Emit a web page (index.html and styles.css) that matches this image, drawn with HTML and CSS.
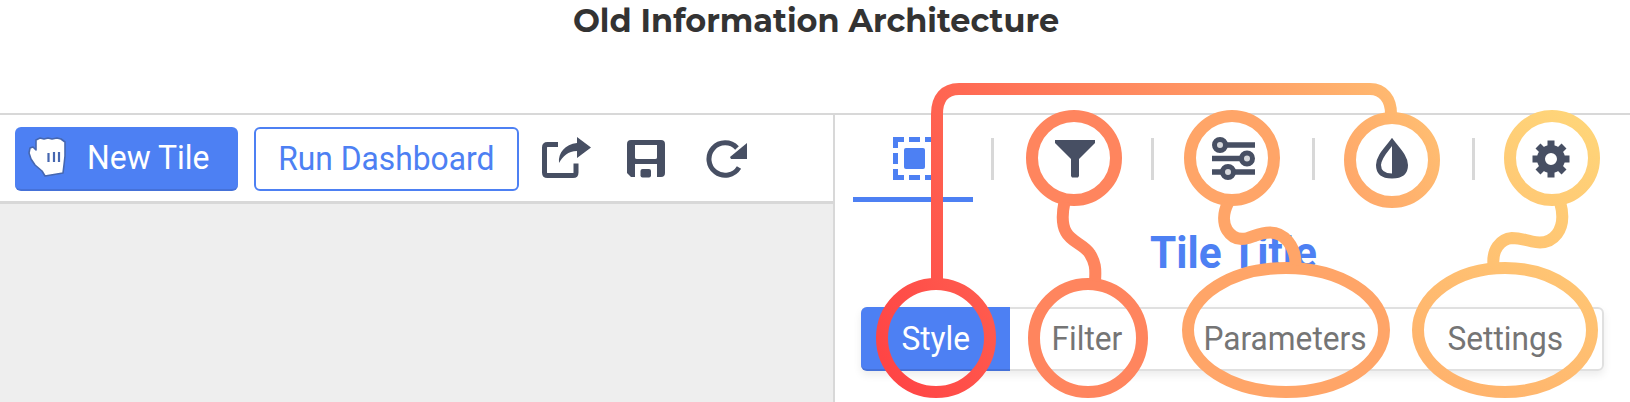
FILE: index.html
```html
<!DOCTYPE html>
<html lang="en">
<head>
<meta charset="utf-8">
<title>Old Information Architecture</title>
<link rel="stylesheet" href="styles.css">
</head>
<body>
<main class="page">
  <h1 class="heading"><span class="t-heading">Old Information Architecture</span></h1>
  <div class="app">
    <section class="left">
      <div class="toolbar">
        <button class="btn primary">
          <svg class="hand" width="42" height="44" viewBox="0 0 42 44"><path d="M8 4L12 2L16 3L20 2L24 3L29 2L33 3L37 6L37 20L36 29L35 37L29 38L17 40L14 35L7 29L3 23L1 17L2 12L5 11L8 14Z" fill="#fff" stroke="#4667b0" stroke-width="1.6" stroke-linejoin="round"/><path d="M20.500 17v9M26 16v10M31 16v10" stroke="#4667b0" stroke-width="2.200"/></svg>
          <span class="t-new">New Tile</span>
        </button>
        <button class="btn outline"><span class="t-run">Run Dashboard</span></button>
        <svg class="ico share" width="50" height="42" viewBox="0 0 50 42"><path d="M16 7.500H5.500Q2.500 7.500 2.500 10.500V35.500Q2.500 38.500 5.500 38.500H31Q34 38.500 34 35.500V26.500" fill="none" stroke="#474f63" stroke-width="5"/><path d="M17 26C16 16 23 7 35 6V0L49 10.500L35 21V14C26 14 21 19 17 26Z" fill="#474f63"/></svg>
        <svg class="ico save" width="38" height="38" viewBox="0 0 38 38"><path d="M4 0H34Q38 0 38 4V33Q38 37 34 37H30V24H8V37H4L0 33V4Q0 0 4 0ZM8 5V17.500Q8 19 10 19H28Q30 19 30 17.500V5Z" fill="#474f63" fill-rule="evenodd"/><rect x="13.500" y="29" width="10.500" height="8.500" rx="2" fill="#474f63"/></svg>
        <svg class="ico refresh" width="41" height="38" viewBox="0 0 41 38"><path d="M31 8A16.200 16.200 0 1 0 33 27.500" fill="none" stroke="#474f63" stroke-width="5"/><path d="M41 3V19H25L24 17Z" fill="#474f63"/></svg>
      </div>
      <div class="canvas"></div>
    </section>
    <section class="right">
      <nav class="tabs">
        <div class="tab active"><svg width="43" height="43" viewBox="0 0 43 43" fill="#4d80f3"><path d="M0 0H11V5H5V11H0ZM16 0H27V5H16ZM32 0H43V11H38V5H32ZM0 16H5V27H0ZM38 16H43V27H38ZM0 32H5V38H11V43H0ZM16 38H27V43H16ZM38 32H43V43H32V38H38Z"/><rect x="11" y="11" width="21" height="21" rx="2"/></svg></div>
        <i class="sep"></i>
        <div class="tab funnel"><svg width="40" height="38" viewBox="0 0 40 38"><path d="M0 0H40V3L24 19V36L23 37.500H17L16 36V19L0 3Z" fill="#474f63"/></svg></div>
        <i class="sep"></i>
        <div class="tab sliders"><svg width="43" height="43" viewBox="0 0 43 43"><path d="M8 8H43M0 21.500H35M0 35H43" stroke="#474f63" stroke-width="5.500"/><g fill="#d6d8dc" stroke="#474f63" stroke-width="5"><circle cx="8" cy="8" r="5.500"/><circle cx="35" cy="21.500" r="5.500"/><circle cx="16" cy="35" r="5.500"/></g></svg></div>
        <i class="sep"></i>
        <div class="tab drop"><svg width="34" height="42" viewBox="0 0 34 42"><path d="M17 4C11 12 3.500 19 3.500 27C3.500 34 8 38 17 38C26 38 30.500 34 30.500 27C30.500 19 23 12 17 4Z" fill="#fff" stroke="#474f63" stroke-width="5"/><path d="M17 4C23 12 30 19 30 27C30 34 26 38 17 38Z" fill="#474f63"/></svg></div>
        <i class="sep"></i>
        <div class="tab gear"><svg width="38" height="38" viewBox="-19 -19 38 38"><path d="M0-18.500V18.500M-18.500 0H18.500M-13-13L13 13M13-13L-13 13" stroke="#474f63" stroke-width="7"/><circle r="10" fill="#fff" stroke="#474f63" stroke-width="8"/></svg></div>
      </nav>
      <h2 class="tile-title"><span class="t-tile">Tile Title</span></h2>
      <div class="segments">
        <div class="seg on"><span class="t-seg">Style</span></div>
        <div class="seg filter"><span class="t-seg">Filter</span></div>
        <div class="seg params"><span class="t-seg">Parameters</span></div>
        <div class="seg settings"><span class="t-seg">Settings</span></div>
      </div>
    </section>
  </div>
  <svg class="links" width="1630" height="402" viewBox="0 0 1630 402" fill="none" stroke-width="12">
    <defs>
      <linearGradient id="warm" gradientUnits="userSpaceOnUse" x1="900" y1="390" x2="1430" y2="100"><stop offset="0" stop-color="#ff4545"/><stop offset=".32" stop-color="#ff6853"/><stop offset=".59" stop-color="#ff8c60"/><stop offset="1" stop-color="#ffbf72"/></linearGradient>
      <linearGradient id="gold" gradientUnits="userSpaceOnUse" x1="1430" y1="370" x2="1590" y2="120"><stop offset="0" stop-color="#ffb36d"/><stop offset="1" stop-color="#ffd579"/></linearGradient>
    </defs>
    <g stroke="url(#warm)"><circle cx="936" cy="338" r="54"/><circle cx="1392" cy="160" r="42"/><path d="M937 284V114C937 98 945 89 959 89H1370C1383 89 1391 99 1391 114"/></g>
    <g stroke="#ff855e"><circle cx="1074" cy="158" r="42"/><circle cx="1088" cy="338" r="54"/><path d="M1064.500 202C1062 214 1062 225 1066 232C1071 242 1085 245 1090 254C1095 262 1096 268 1095 281"/></g>
    <g stroke="#ffa568"><circle cx="1232" cy="158" r="42"/><ellipse cx="1286" cy="330" rx="98" ry="62"/><path d="M1228 203C1223 213 1223 223 1227 230C1232 238 1239 240.500 1248 238C1257 235 1262 232.500 1270 232.500C1284 232.500 1296 246 1295.500 265"/></g>
    <g stroke="url(#gold)"><circle cx="1552" cy="158" r="42"/><ellipse cx="1505" cy="330" rx="87" ry="62"/><path d="M1560 202C1564 216 1563 226 1557 234C1551 242 1543 244 1532 241.500C1523 239.500 1520 238 1512 238C1500 239 1492 250 1493.500 265"/></g>
  </svg>
</main>
</body>
</html>
```
FILE: styles.css
```css
* { box-sizing: border-box; }
body { margin: 0; background: #fff; font-family: Roboto, "Liberation Sans", sans-serif; }
.page { position: relative; width: 1630px; height: 402px; overflow: hidden; display: flex; flex-direction: column; }
span { display: inline-block; white-space: nowrap; }
.heading { flex: none; margin: 0; height: 113px; padding: 2px 0 0 2px; text-align: center; font: 700 31.95px/38px Montserrat, Inter, sans-serif; color: #333; }
.app { display: flex; flex: none; height: 289px; border-top: 2px solid #d8d8d8; }
.left { width: 834.5px; border-right: 2px solid #d8d8d8; display: flex; flex-direction: column; }
.toolbar { height: 89px; padding: 12px 0 0 14.5px; display: flex; border-bottom: 3px solid #d8d8d8; }
.canvas { flex: 1; background: #eee; }
.btn { flex: none; height: 63.5px; padding: 0; border-radius: 6px; display: flex; align-items: center; font: 400 33px/38px Roboto, sans-serif; }
.primary { width: 223px; margin-right: 16px; border: 0; border-bottom: 2px solid #4571d8; background: #4d80f3; color: #fff; }
.hand { margin: 1px 0 0 13px; }
.t-new { margin-left: 17.5px; transform: scaleX(.967); transform-origin: left; }
.outline { width: 265px; justify-content: center; border: 2px solid #4d80f3; background: #fff; color: #4d80f3; }
.t-run { transform: scaleX(.963); }
.ico { margin-top: 13px; flex: none; }
.share { margin: 10px 0 0 23.5px; }
.save { margin-left: 35px; }
.refresh { margin-left: 41px; }
.right { width: 795.5px; }
.tabs { height: 87px; display: flex; align-items: center; padding-left: 18.5px; }
.tab { flex: none; width: 120px; height: 87px; display: flex; align-items: center; justify-content: center; }
.tab.active { border-bottom: 5px solid #4d80f3; padding: 5px 0 0 3px; }
.funnel { padding-left: 3px; }
.sliders { padding-right: 2px; }
.drop { padding-right: 6px; }
.gear { padding-right: 8px; }
.sep { flex: none; width: 3px; height: 42px; margin: 0 20px 0 17.5px; background: #d8d8d8; }
.tile-title { margin: 0; height: 105px; padding: 25px 0 0 315.5px; font: 700 44px/52px Roboto, sans-serif; color: #4d80f3; }
.t-tile { transform: scaleX(.963); transform-origin: left; }
.segments { display: flex; width: 743px; height: 64px; margin-left: 26.5px; border: 2px solid #e0e0e0; border-radius: 6px; box-shadow: 0 4px 8px rgba(0,0,0,.08); font-size: 33px; color: #757575; line-height: 60px; }
.seg { height: 60px; display: flex; justify-content: center; }
.t-seg { transform: scaleX(.96); }
.on { width: 149px; height: 64px; margin: -2px 0 0 -2px; padding: 2px 0 0 1px; background: #4d80f3; color: #fff; border-radius: 6px 0 0 6px; border-bottom: 2px solid #4571d8; }
.filter { width: 155px; }
.params { width: 240px; padding-left: 2px; }
.settings { width: 199px; padding-left: 5px; }
.links { position: absolute; left: 0; top: 0; }
```
